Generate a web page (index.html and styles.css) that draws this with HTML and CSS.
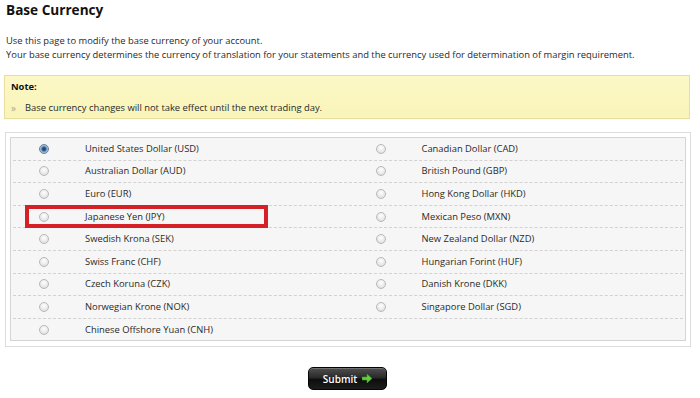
FILE: index.html
```html
<!DOCTYPE html>
<html>
<head>
<meta charset="utf-8">
<link rel="stylesheet" href="styles.css">
</head>
<body>
<div class="page">
  <h1 class="title">Base Currency</h1>
  <p class="intro">Use this page to modify the base currency of your account.<br>Your base currency determines the currency of translation for your statements and the currency used for determination of margin requirement.</p>
  <div class="note">
    <div class="note-title">Note:</div>
    <div class="note-text"><span class="raquo">&raquo;</span>Base currency changes will not take effect until the next trading day.</div>
  </div>
  <div class="panel">
    <div class="grid">
      <div class="row">
        <label class="cell"><span class="radio checked"></span><span class="lbl">United States Dollar (USD)</span></label>
        <label class="cell"><span class="radio"></span><span class="lbl">Canadian Dollar (CAD)</span></label>
      </div>
      <div class="row">
        <label class="cell"><span class="radio"></span><span class="lbl">Australian Dollar (AUD)</span></label>
        <label class="cell"><span class="radio"></span><span class="lbl">British Pound (GBP)</span></label>
      </div>
      <div class="row">
        <label class="cell"><span class="radio"></span><span class="lbl">Euro (EUR)</span></label>
        <label class="cell"><span class="radio"></span><span class="lbl">Hong Kong Dollar (HKD)</span></label>
      </div>
      <div class="row">
        <label class="cell"><span class="radio"></span><span class="lbl">Japanese Yen (JPY)</span></label>
        <label class="cell"><span class="radio"></span><span class="lbl">Mexican Peso (MXN)</span></label>
        <div class="highlight"></div>
      </div>
      <div class="row">
        <label class="cell"><span class="radio"></span><span class="lbl">Swedish Krona (SEK)</span></label>
        <label class="cell"><span class="radio"></span><span class="lbl">New Zealand Dollar (NZD)</span></label>
      </div>
      <div class="row">
        <label class="cell"><span class="radio"></span><span class="lbl">Swiss Franc (CHF)</span></label>
        <label class="cell"><span class="radio"></span><span class="lbl">Hungarian Forint (HUF)</span></label>
      </div>
      <div class="row">
        <label class="cell"><span class="radio"></span><span class="lbl">Czech Koruna (CZK)</span></label>
        <label class="cell"><span class="radio"></span><span class="lbl">Danish Krone (DKK)</span></label>
      </div>
      <div class="row">
        <label class="cell"><span class="radio"></span><span class="lbl">Norwegian Krone (NOK)</span></label>
        <label class="cell"><span class="radio"></span><span class="lbl">Singapore Dollar (SGD)</span></label>
      </div>
      <div class="row last">
        <label class="cell"><span class="radio"></span><span class="lbl">Chinese Offshore Yuan (CNH)</span></label>
        <div class="cell"></div>
      </div>
    </div>
  </div>
  <div class="actions">
    <button class="submit" type="button">Submit <svg class="arrow" width="10" height="9" viewBox="0 0 10 9"><path d="M0 3 H5 V0 L10 4.5 L5 9 V6 H0 Z" fill="#5fd13a" stroke="#3a9a20" stroke-width="0.6"/></svg></button>
  </div>
</div>
</body>
</html>
```

FILE: styles.css
```css
html, body {
  margin: 0;
  padding: 0;
  background: #ffffff;
}
.page {
  width: 700px;
  height: 398px;
  font-family: "Open Sans", "DejaVu Sans", sans-serif;
  font-size: 9.4px;
  color: #2a2a2a;
  box-sizing: border-box;
  padding: 0 0 0 4px;
}
.title {
  margin: 0;
  padding: 0 0 0 2px;
  font-size: 13.6px;
  line-height: 19px;
  font-weight: bold;
  color: #111;
}
.intro {
  margin: 15px 0 0 0;
  padding-left: 2px;
  line-height: 14px;
}
.note {
  margin-top: 13px;
  width: 686px;
  height: 44px;
  box-sizing: border-box;
  border: 1px solid #e8dd9b;
  background: linear-gradient(#fcf8c6, #f9f4b8);
  padding: 5px 0 0 6px;
}
.note-title {
  font-weight: bold;
  color: #111;
  line-height: 12px;
}
.note-text {
  margin-top: 9px;
  line-height: 12px;
  display: flex;
}
.raquo {
  color: #b0aa80;
  width: 14px;
  font-size: 10px;
}
.panel {
  margin-top: 13px;
  margin-left: 1px;
  width: 686px;
  box-sizing: border-box;
  border: 1px solid #dcdcdc;
  padding: 4px 4px 5px 4px;
  background: #fff;
}
.grid {
  border: 1px solid #d4d4d4;
  background: #f6f6f6;
  padding: 0 2px;
}
.row {
  position: relative;
  display: grid;
  grid-template-columns: 336.5px 1fr;
  height: 21.6px;
  border-bottom: 1px dashed #d2d2d2;
}
.row.last {
  border-bottom: none;
}
.cell {
  display: flex;
  align-items: center;
  padding-left: 26px;
}
.radio {
  width: 10px;
  height: 10px;
  border-radius: 50%;
  box-sizing: border-box;
  border: 1px solid #b9b9b9;
  background: radial-gradient(circle at 50% 35%, #ffffff 0%, #e4e4e4 70%, #cfcfcf 100%);
  flex: none;
}
.radio.checked {
  border-color: #6a7f96;
  background: radial-gradient(circle at 50% 50%, #1f3e63 0%, #2d5a8a 30%, #8fb0d3 55%, #dfe8f2 100%);
}
.lbl {
  margin-left: 36px;
  line-height: 12px;
  color: #2a2a2a;
}
.highlight {
  position: absolute;
  left: 12px;
  top: -0.5px;
  width: 243px;
  height: 23px;
  box-sizing: border-box;
  border: 4px solid #d42027;
  pointer-events: none;
}
.actions {
  display: flex;
  justify-content: center;
  margin-top: 20px;
  padding-right: 9px;
}
.submit {
  width: 79px;
  height: 23px;
  border-radius: 5px;
  border: 1px solid #050505;
  background: linear-gradient(#505050 0%, #2a2a2a 45%, #0e0e0e 55%, #1c1c1c 100%);
  box-shadow: inset 0 1px 0 rgba(255,255,255,0.2);
  color: #fff;
  font-family: "Open Sans", "DejaVu Sans", sans-serif;
  font-weight: 600;
  font-size: 10px;
  display: flex;
  align-items: center;
  justify-content: center;
  gap: 5px;
  padding: 0;
}
.arrow {
  display: block;
}
```
